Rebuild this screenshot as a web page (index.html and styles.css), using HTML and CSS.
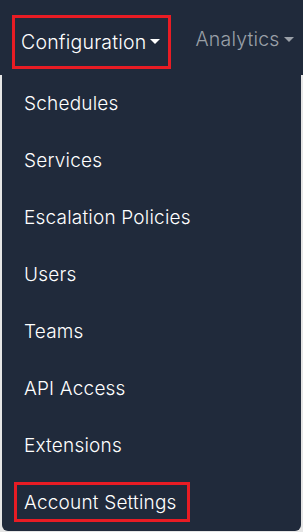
FILE: index.html
```html
<!DOCTYPE html>
<html lang="en">
<head>
    <meta charset="UTF-8">
    <meta name="viewport" content="width=device-width, initial-scale=1.0">
    <title>Configuration Menu</title>
    <link rel="stylesheet" href="styles.css">
</head>
<body>
    <nav class="topbar">
        <div class="nav-item active">Configuration <span class="caret"></span></div>
        <div class="nav-item muted">Analytics <span class="caret"></span></div>
    </nav>
    <ul class="dropdown">
        <li>Schedules</li>
        <li>Services</li>
        <li>Escalation Policies</li>
        <li>Users</li>
        <li>Teams</li>
        <li>API Access</li>
        <li>Extensions</li>
        <li class="highlight">Account Settings</li>
    </ul>
</body>
</html>
```
FILE: styles.css
```css
body {
    margin: 0;
    font-family: 'Inter', 'Liberation Sans', sans-serif;
    font-weight: 300;
    background-color: #e6e6e6;
    width: 303px;
    height: 532px;
    overflow: hidden;
}
.topbar {
    display: flex;
    align-items: center;
    height: 75px;
    background-color: #202a3b;
    padding-left: 12px;
    gap: 24px;
}
.nav-item {
    display: flex;
    align-items: center;
    font-size: 19.5px;
    letter-spacing: 0.2px;
    color: #ffffff;
    white-space: nowrap;
}
.nav-item.active {
    border: 3px solid #e81c24;
    height: 54px;
    margin-top: 8px;
    padding: 0 8px 0 6px;
    box-sizing: border-box;
}
.nav-item.muted {
    color: #9aa0a8;
    margin-top: 3px;
}
.caret {
    display: inline-block;
    width: 0;
    height: 0;
    margin-left: 4px;
    border-left: 5px solid transparent;
    border-right: 5px solid transparent;
    border-top: 5px solid currentColor;
}
.dropdown {
    list-style: none;
    margin: 0 2px;
    padding: 0 0 9px;
    background-color: #202a3b;
    border-radius: 0 0 6px 6px;
}
.dropdown li {
    height: 57px;
    display: flex;
    align-items: center;
    padding-left: 22px;
    font-size: 19px;
    letter-spacing: 0.2px;
    color: #ffffff;
}
.dropdown li.highlight {
    height: 40px;
    margin: 8px 0 0 12px;
    padding: 0 10px 0 7px;
    width: fit-content;
    border: 3px solid #e81c24;
    box-sizing: border-box;
}
```
